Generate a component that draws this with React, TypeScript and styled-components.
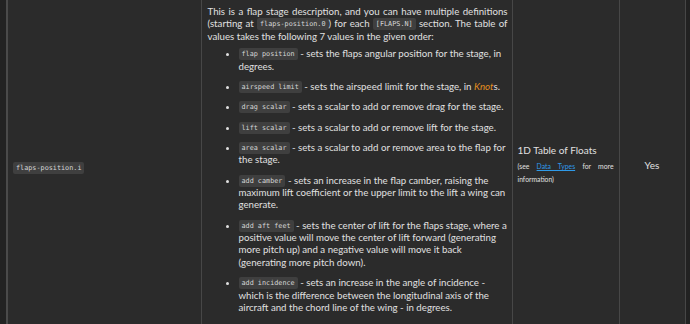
import type { ReactNode } from 'react';
import styled, { createGlobalStyle } from 'styled-components';

const GlobalStyle = createGlobalStyle`
    html, body {
        margin : 0;
        padding : 0;
        background-color : #222222;
    }
    body {
        font-family : Lato, "Open Sans", sans-serif;
        color : #e0e0e0;
    }
`

const StCode = styled.code`
    font-family : "DejaVu Sans Mono", "Liberation Mono", monospace;
    font-size : 6.8px;
    line-height : 1;
    color : #d6d6d6;
    background-color : #3f3f3f;
    border-radius : 2px;
    padding : 2px 3px;
    vertical-align : 1px;
`

const StKnots = styled.a`
    color : #e8901e;
    font-style : italic;
`

type Stage = { name : string; text : ReactNode };

const stages : Stage[] = [
    { name : 'flap position', text : ' - sets the flaps angular position for the stage, in degrees.' },
    { name : 'airspeed limit', text : <> - sets the airspeed limit for the stage, in <StKnots>Knot</StKnots>s.</> },
    { name : 'drag scalar', text : ' - sets a scalar to add or remove drag for the stage.' },
    { name : 'lift scalar', text : ' - sets a scalar to add or remove lift for the stage.' },
    { name : 'area scalar', text : ' - sets a scalar to add or remove area to the flap for the stage.' },
    { name : 'add camber', text : ' - sets an increase in the flap camber, raising the maximum lift coefficient or the upper limit to the lift a wing can generate.' },
    { name : 'add aft feet', text : ' - sets the center of lift for the flaps stage, where a positive value will move the center of lift forward (generating more pitch up) and a negative value will move it back (generating more pitch down).' },
    { name : 'add incidence', text : ' - sets an increase in the angle of incidence - which is the difference between the longitudinal axis of the aircraft and the chord line of the wing - in degrees.' },
];

const App = () => {
    return (
        <>
            <GlobalStyle />
            <StPage>
                <StTable>
                    <colgroup>
                        <col style = {{ width : 194 }} />
                        <col style = {{ width : 311 }} />
                        <col style = {{ width : 107 }} />
                        <col style = {{ width : 66 }} />
                    </colgroup>
                    <tbody>
                        <tr>
                            <StNameCell>
                                <StCode>flaps-position.i</StCode>
                            </StNameCell>
                            <StDescCell>
                                <StIntro>
                                    This is a flap stage description, and you can have multiple definitions (starting at <StCode>flaps-position.0</StCode>) for each <StCode>[FLAPS.N]</StCode> section. The table of values takes the following 7 values in the given order:
                                </StIntro>
                                <StList>
                                    {stages.map((stage) => (
                                        <li key = {stage.name}>
                                            <StCode>{stage.name}</StCode>{stage.text}
                                        </li>
                                    ))}
                                </StList>
                            </StDescCell>
                            <StTypeCell>
                                <StTypeTitle>1D Table of Floats</StTypeTitle>
                                <StTypeNote>
                                    (see <StLink href = "#">Data Types</StLink> for more information)
                                </StTypeNote>
                            </StTypeCell>
                            <StRequiredCell>Yes</StRequiredCell>
                        </tr>
                    </tbody>
                </StTable>
            </StPage>
        </>
    )
}

export default App;

const StPage = styled.div`
    width : 690px;
    height : 324px;
    overflow : hidden;
    padding-left : 6px;
    box-sizing : border-box;
`

const StTable = styled.table`
    width : 678px;
    border-collapse : collapse;
    table-layout : fixed;
    background-color : #2b2b2b;
    border-left : 2px solid #4a4a4a;

    td {
        border : 1px solid #474747;
        border-top : none;
        vertical-align : middle;
    }
`

const StNameCell = styled.td`
    padding : 0 5px;
`

const StDescCell = styled.td`
    padding : 5px 4px 16px 6px;
    font-size : 9.7px;
    line-height : 12.4px;
`

const StIntro = styled.p`
    margin : 0;
    text-align : justify;
`

const StList = styled.ul`
    margin : 5px 0 0 0;
    padding-left : 31px;

    li {
        margin-bottom : 7.9px;
    }
    li:last-child {
        margin-bottom : 0;
    }
`

const StTypeCell = styled.td`
    padding : 0 5px;
`

const StTypeTitle = styled.div`
    font-size : 10px;
    line-height : 13px;
    margin-bottom : 3px;
`

const StTypeNote = styled.p`
    margin : 0;
    font-size : 6.8px;
    line-height : 12.5px;
    text-align : justify;
`

const StLink = styled.a`
    color : #2f9ae8;
`

const StRequiredCell = styled.td`
    text-align : center;
    font-size : 10px;
`
